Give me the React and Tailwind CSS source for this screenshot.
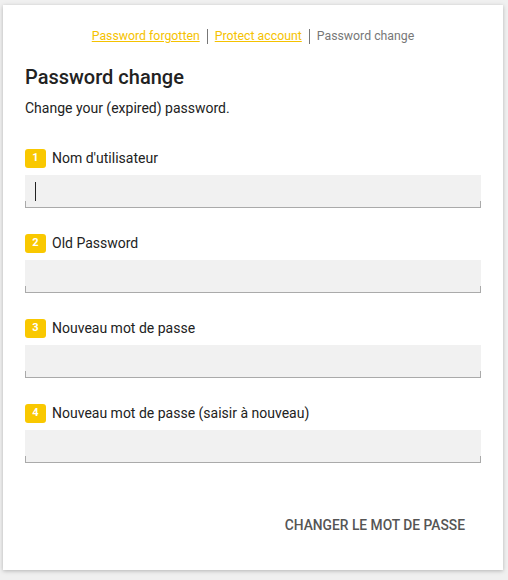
import React from "react";

const fields = [
    { n: "1", label: "Nom d'utilisateur", focused: true },
    { n: "2", label: "Old Password" },
    { n: "3", label: "Nouveau mot de passe" },
    { n: "4", label: "Nouveau mot de passe (saisir à nouveau)" },
];

const Field = ({ n, label, focused }) => {
    return (
        <div className="flex flex-col">
            <div className="flex items-center h-[19px] gap-[6px]">
                <span className="flex items-center justify-center w-[21px] h-[19px] rounded-[3px] bg-[#f9c800] text-white text-[11px] font-bold">
                    {n}
                </span>
                <span className="text-[14px] text-[#222]">{label}</span>
            </div>
            <div className="relative mt-[7px] h-[33px] bg-[#f1f1f1] border-b border-[#aaa]">
                <span className="absolute left-0 bottom-0 w-px h-[6px] bg-[#aaa]"></span>
                <span className="absolute right-0 bottom-0 w-px h-[6px] bg-[#aaa]"></span>
                {focused && <span className="absolute left-[10px] top-[7px] w-px h-[19px] bg-[#222]"></span>}
            </div>
        </div>
    );
};

const App = () => {
    return (
        <div className="min-h-[580px] bg-[#f0f0f0] px-[3px] pt-[5px] font-['Roboto',sans-serif]">
            <div className="w-[500px] h-[565px] bg-white shadow-[0_1px_4px_rgba(0,0,0,0.25)] px-[22px] pt-[23px] flex flex-col">
                <div className="flex justify-center items-center h-[16px] text-[12.3px]">
                    <a className="text-[#f5c200] underline">Password forgotten</a>
                    <span className="mx-[7px] w-px h-[15px] bg-[#777]"></span>
                    <a className="text-[#f5c200] underline">Protect account</a>
                    <span className="mx-[7px] w-px h-[15px] bg-[#777]"></span>
                    <span className="text-[#777]">Password change</span>
                </div>
                <h2 className="mt-[19px] text-[20px] leading-[28px] font-medium text-[#222]">Password change</h2>
                <p className="mt-[7px] text-[14px] leading-[20px] text-[#222]">Change your (expired) password.</p>
                <div className="mt-[31px] flex flex-col gap-[26px]">
                    {fields.map((f) => (
                        <Field key={f.n} {...f} />
                    ))}
                </div>
                <div className="flex justify-end mt-[54px] pr-[16px]">
                    <button className="text-[13.8px] leading-[16px] font-medium text-[#555] uppercase">
                        Changer le mot de passe
                    </button>
                </div>
            </div>
        </div>
    );
};

export default App;
